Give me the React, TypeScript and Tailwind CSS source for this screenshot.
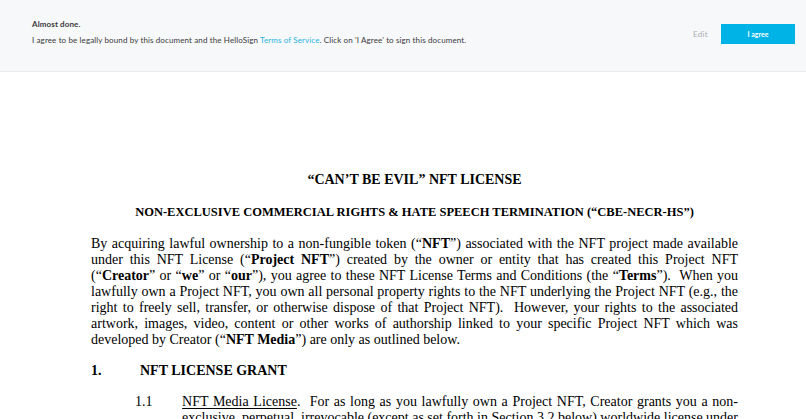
import type { ReactNode } from 'react'

const serif = { fontFamily: '"Liberation Serif", "Times New Roman", serif' }

function Line({ children, last }: { children: ReactNode; last?: boolean }) {
  return (
    <div className={last ? 'whitespace-nowrap text-left' : 'whitespace-nowrap text-justify [text-align-last:justify]'}>
      {children}
    </div>
  )
}

export default function App() {
  return (
    <div className="min-h-screen bg-white">
      <header
        className="flex h-[72px] items-center border-b border-[#ebecee] bg-[#f7f8fa] pl-8 pr-[11px]"
        style={{ fontFamily: 'Lato, "Open Sans", sans-serif' }}
      >
        <div className="flex flex-col gap-[4px] pb-[7px] text-[8px] leading-[12px] tracking-[0.12px] text-[#3a3a3a]">
          <span className="font-bold">Almost done.</span>
          <span>
            I agree to be legally bound by this document and the HelloSign{' '}
            <span className="text-[#2ab4df]">Terms of Service</span>. Click on 'I Agree' to sign this document.
          </span>
        </div>
        <div className="ml-auto flex items-center gap-[13px] pb-[3px]">
          <button className="text-[8px] tracking-[0.3px] text-[#a9adb3]">Edit</button>
          <button className="h-[20px] w-[74px] bg-[#00b3e6] text-[7px] font-bold text-white">I agree</button>
        </div>
      </header>

      <main className="pl-[91px] pt-[99px] text-black" style={serif}>
        <div className="w-[647px]">
          <h1 className="text-center text-[14px] font-bold leading-[18px]">“CAN’T BE EVIL” NFT LICENSE</h1>
          <h2 className="mt-[15px] text-center text-[12.5px] font-bold leading-[16px]">
            NON-EXCLUSIVE COMMERCIAL RIGHTS &amp; HATE SPEECH TERMINATION (“CBE-NECR-HS”)
          </h2>
          <div className="mt-[16px] text-[14px] leading-[16px]">
            <Line>
              By acquiring lawful ownership to a non-fungible token (“<b>NFT</b>”) associated with the NFT project made available
            </Line>
            <Line>
              under this NFT License (“<b>Project NFT</b>”) created by the owner or entity that has created this Project NFT
            </Line>
            <Line>
              (“<b>Creator</b>” or “<b>we</b>” or “<b>our</b>”), you agree to these NFT License Terms and Conditions (the “<b>Terms</b>”).&nbsp; When you
            </Line>
            <Line>
              lawfully own a Project NFT, you own all personal property rights to the NFT underlying the Project NFT (e.g., the
            </Line>
            <Line>
              right to freely sell, transfer, or otherwise dispose of that Project NFT).&nbsp; However, your rights to the associated
            </Line>
            <Line>
              artwork, images, video, content or other works of authorship linked to your specific Project NFT which was
            </Line>
            <Line last>
              developed by Creator (“<b>NFT Media</b>”) are only as outlined below.
            </Line>
          </div>

          <div className="mt-[15px] flex text-[14px] font-bold leading-[16px]">
            <span className="w-[49px]">1.</span>
            <span>NFT LICENSE GRANT</span>
          </div>

          <div className="mt-[15px] flex text-[14px] leading-[16px]">
            <span className="w-[92px] pl-[44px]">1.1</span>
            <div className="flex-1">
              <Line>
                <span className="underline underline-offset-2">NFT Media License</span>.&nbsp; For as long as you lawfully own a Project NFT, Creator grants you a non-
              </Line>
              <Line>
                exclusive, perpetual, irrevocable (except as set forth in Section 3.2 below) worldwide license under
              </Line>
            </div>
          </div>
        </div>
      </main>
    </div>
  )
}
